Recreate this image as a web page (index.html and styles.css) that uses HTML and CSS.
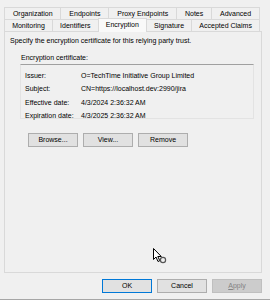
FILE: index.html
```html
<html><head>
<title>Relying Party Trust Properties</title>
<link rel="stylesheet" href="styles.css">
</head><body>

<div class="dialog">

<div class="tabs">
  <div class="tabrow">
    <div class="tab">Organization</div>
    <div class="tab">Endpoints</div>
    <div class="tab">Proxy Endpoints</div>
    <div class="tab">Notes</div>
    <div class="tab">Advanced</div>
  </div>
  <div class="tabrow">
    <div class="tab">Monitoring</div>
    <div class="tab">Identifiers</div>
    <div class="tab selected">Encryption</div>
    <div class="tab">Signature</div>
    <div class="tab">Accepted Claims</div>
  </div>
</div>

<div class="page">
  <p class="intro">Specify the encryption certificate for this relying party trust.</p>
  <p class="label">Encryption certificate:</p>
  <div class="certbox">
    <div class="row"><span class="key">Issuer:</span><span>O=TechTime Initiative Group Limited</span></div>
    <div class="row"><span class="key">Subject:</span><span>CN=https://localhost.dev:2990/jira</span></div>
    <div class="row"><span class="key">Effective date:</span><span>4/3/2024 2:36:32 AM</span></div>
    <div class="row"><span class="key">Expiration date:</span><span>4/3/2025 2:36:32 AM</span></div>
  </div>
  <div class="actions">
    <div class="button">Browse...</div>
    <div class="button">View...</div>
    <div class="button">Remove</div>
  </div>
</div>

<div class="footer">
  <div class="button default">OK</div>
  <div class="button">Cancel</div>
  <div class="button disabled"><u>A</u>pply</div>
</div>

</div>

<svg class="cursor" width="14" height="16" viewBox="0 0 14 16">
  <path d="M0.5 0.5 L0.5 11.5 L3 9 L5 13.5 L6.8 12.7 L4.8 8.5 L8.3 8.5 Z" fill="#ffffff" stroke="#000000" stroke-width="1"/>
  <circle cx="10" cy="12" r="2.6" fill="none" stroke="#555555" stroke-width="1.2"/>
</svg>

</body></html>
```

FILE: styles.css
```css
body {
  margin:0;
  background-color:#f0f0f0;
  font-family:"Liberation Sans", Arial, sans-serif;
  font-size:7px;
  color:#000000;
}
.dialog {
  width:270px;
  height:300px;
  position:relative;
  border-bottom:1px solid #a6a6a6;
  box-sizing:border-box;
}
.tabs {
  padding-top:7px;
  margin-left:4px;
  width:255px;
}
.tabrow {
  display:flex;
  height:12px;
}
.tab {
  flex:1 1 auto;
  border:1px solid #d9d9d9;
  border-bottom:none;
  margin-right:-1px;
  text-align:center;
  line-height:11px;
  background-color:#f0f0f0;
  white-space:nowrap;
}
.tab.selected {
  background-color:#f9f9f9;
  position:relative;
  z-index:1;
  height:13px;
  margin-top:-1px;
}
.page {
  margin-left:4px;
  width:258px;
  height:242px;
  box-sizing:border-box;
  border:1px solid #d9d9d9;
  padding:4px 0 0 5px;
}
.intro {
  margin:0;
  line-height:10px;
}
.label {
  margin:7px 0 0 11px;
  line-height:10px;
}
.certbox {
  margin:1px 0 0 10px;
  width:234px;
  height:55px;
  box-sizing:border-box;
  border:1px solid #e3e3e3;
  border-top-color:#a0a0a0;
  padding:4px 0 0 4px;
}
.row {
  display:flex;
  line-height:13.4px;
}
.key {
  width:56px;
}
.actions {
  display:flex;
  gap:5px;
  margin:14px 0 0 18px;
}
.button {
  width:50px;
  height:14px;
  box-sizing:border-box;
  border:1px solid #adadad;
  background-color:#e1e1e1;
  text-align:center;
  line-height:12px;
}
.footer {
  display:flex;
  justify-content:flex-end;
  gap:5px;
  padding:6px 8px 0 0;
}
.button.default {
  border-color:#0078d7;
}
.button.disabled {
  background-color:#cccccc;
  border-color:#bfbfbf;
  color:#838383;
}
.cursor {
  position:absolute;
  left:153px;
  top:248px;
}
```
